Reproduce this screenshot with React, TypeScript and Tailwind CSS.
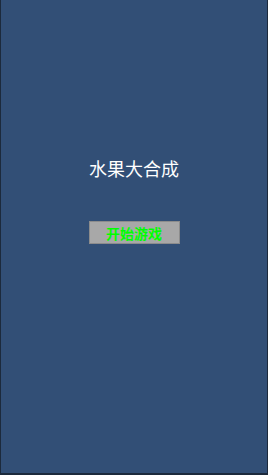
export default function App() {
  return (
    <div className="w-[268px] h-[475px] bg-[#1c2a3c] pl-px pr-px pb-[2px]">
      <div
        className="w-full h-full bg-[#324f76] flex flex-col items-center"
        style={{ fontFamily: '"Noto Sans CJK SC", "Noto Sans", sans-serif' }}
      >
        <div className="mt-[155px] h-[26px] leading-[26px] text-[18px] text-white">水果大合成</div>
        <button className="mt-[40px] w-[91px] h-[23px] bg-[#a8a8a8] border border-[#8c8c8c] text-[14px] leading-[20px] font-bold text-[#00ff00]">
          开始游戏
        </button>
      </div>
    </div>
  );
}
